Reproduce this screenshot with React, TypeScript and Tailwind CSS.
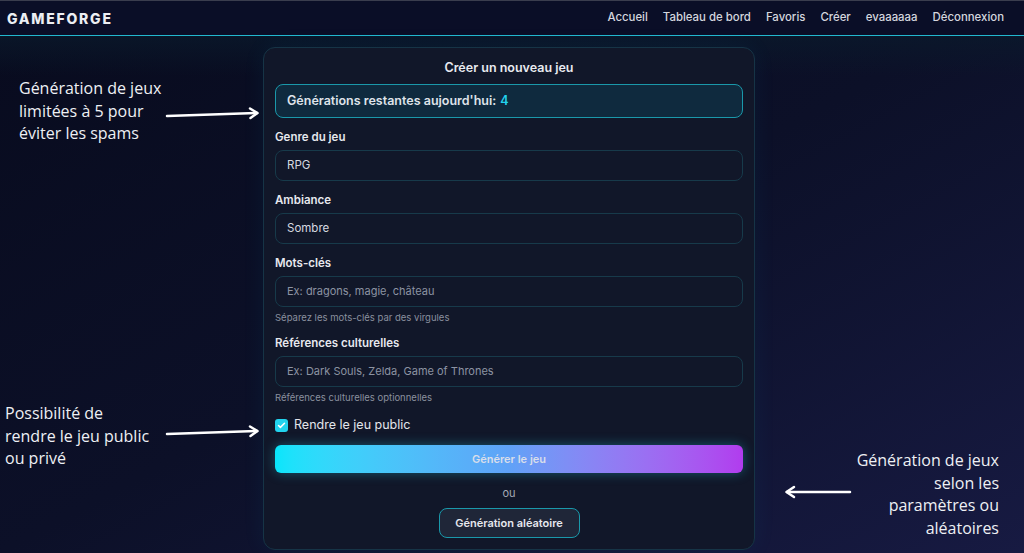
import { Check } from "lucide-react";

const navLinks = ["Accueil", "Tableau de bord", "Favoris", "Créer", "evaaaaaa", "Déconnexion"];

const fields = [
    { label: "Genre du jeu", value: "RPG", placeholder: "", help: "" },
    { label: "Ambiance", value: "Sombre", placeholder: "", help: "" },
    { label: "Mots-clés", value: "", placeholder: "Ex: dragons, magie, château", help: "Séparez les mots-clés par des virgules" },
    { label: "Références culturelles", value: "", placeholder: "Ex: Dark Souls, Zelda, Game of Thrones", help: "Références culturelles optionnelles" },
];

function ArrowRight() {
    return (
        <svg width="96" height="14" viewBox="0 0 96 14" fill="none">
            <path d="M2 9 L92 6" stroke="white" strokeWidth="2.5" strokeLinecap="round" />
            <path d="M85 1.5 L92.5 6 L85.5 11" stroke="white" strokeWidth="2.5" strokeLinecap="round" strokeLinejoin="round" />
        </svg>
    );
}

function ArrowLeft() {
    return (
        <svg width="68" height="14" viewBox="0 0 68 14" fill="none">
            <path d="M66 7 L3 7" stroke="white" strokeWidth="2.5" strokeLinecap="round" />
            <path d="M10 2 L2.5 7 L10 12" stroke="white" strokeWidth="2.5" strokeLinecap="round" strokeLinejoin="round" />
        </svg>
    );
}

export default function App() {
    return (
        <div className="relative h-[553px] w-[1024px] overflow-hidden bg-gradient-to-br from-[#080b1e] via-[#0c1028] to-[#171a42] font-['Inter',sans-serif]">
            <nav className="flex h-[36px] items-center justify-between border-t border-t-[#3a3d4e] border-b border-b-[#22b8cf] bg-[#0a0e27] pl-[7px] pr-[20px]">
                <span className="text-[14px] font-extrabold tracking-[0.125em] text-[#eceef3]">GAMEFORGE</span>
                <div className="flex items-center gap-[15px] text-[11.4px] font-medium text-[#d4d6de]">
                    {navLinks.map(link => (
                        <span key={link}>{link}</span>
                    ))}
                </div>
            </nav>

            <div className="h-[40px] w-full bg-gradient-to-b from-[#0a1a2c] to-transparent absolute top-[36px] left-0 opacity-70" />

            <div className="relative flex justify-center pr-[6px] pt-[11px]">
                <div className="w-[492px] rounded-xl border border-[#163446] bg-[#111729] px-[11px] pt-[12px] pb-[11px] shadow-[0_0_24px_rgba(34,211,238,0.06)]">
                    <h2 className="text-center text-[12.5px] leading-[16px] font-semibold text-[#e8eaf0]">Créer un nouveau jeu</h2>

                    <div className="mt-[8px] flex h-[34px] items-center rounded-lg border border-[#1a98aa] bg-[#0f2a3e] px-[11px] text-[12.5px] font-semibold text-[#dfe3ea]">
                        Générations restantes aujourd'hui:<span className="ml-[4px] text-[#22d3ee]">4</span>
                    </div>

                    {fields.map(field => (
                        <div key={field.label} className="mt-[12px]">
                            <label className="block text-[11.5px] leading-[14px] font-semibold text-[#e6e8ee]">{field.label}</label>
                            <div className="mt-[6px] flex h-[31px] items-center rounded-lg border border-[#173a4a] bg-[#111729] px-[11px] text-[11px]">
                                {field.value ? (
                                    <span className="text-[11.5px] text-[#d6d9e0]">{field.value}</span>
                                ) : (
                                    <span className="text-[#8c93a2]">{field.placeholder}</span>
                                )}
                            </div>
                            {field.help && (
                                <p className="mt-[4px] text-[9.5px] leading-[13px] text-[#8a909e]">{field.help}</p>
                            )}
                        </div>
                    ))}

                    <div className="mt-[13px] flex h-[16px] items-center gap-[6px]">
                        <span className="flex h-[13px] w-[13px] items-center justify-center rounded-[3px] bg-[#22d3ee]">
                            <Check className="h-[9px] w-[9px] text-white" strokeWidth={4} />
                        </span>
                        <span className="text-[12.5px] text-[#e2e5eb]">Rendre le jeu public</span>
                    </div>

                    <button className="mt-[12px] flex h-[28px] w-full items-center justify-center rounded-md bg-gradient-to-r from-[#06e6fb] via-[#5fa2f7] to-[#b13cee] text-[11px] font-semibold text-[#d9deea] shadow-[0_0_12px_rgba(34,211,238,0.35)]">
                        Générer le jeu
                    </button>

                    <p className="mt-[13px] text-center text-[11px] leading-[14px] text-[#a4a9b6]">ou</p>

                    <div className="mt-[8px] flex justify-center">
                        <button className="h-[30px] w-[141px] rounded-lg border border-[#1a98aa] bg-[#1f2638] text-[11px] font-semibold text-[#e6e8ee]">
                            Génération aléatoire
                        </button>
                    </div>
                </div>
            </div>

            <div className="absolute left-[19px] top-[77px] font-['Open_Sans',sans-serif] text-[16px] leading-[22.5px] text-[#eef0f4]">
                Génération de jeux<br />limitées à 5 pour<br />éviter les spams
            </div>
            <div className="absolute left-[165px] top-[107px]">
                <ArrowRight />
            </div>

            <div className="absolute left-[5px] top-[402px] font-['Open_Sans',sans-serif] text-[16px] leading-[22.5px] text-[#eef0f4]">
                Possibilité de<br />rendre le jeu public<br />ou privé
            </div>
            <div className="absolute left-[165px] top-[425px]">
                <ArrowRight />
            </div>

            <div className="absolute right-[25px] top-[449px] text-right font-['Open_Sans',sans-serif] text-[16px] leading-[22.5px] text-[#eef0f4]">
                Génération de jeux<br />selon les<br />paramètres ou<br />aléatoires
            </div>
            <div className="absolute left-[784px] top-[485px]">
                <ArrowLeft />
            </div>
        </div>
    );
}
